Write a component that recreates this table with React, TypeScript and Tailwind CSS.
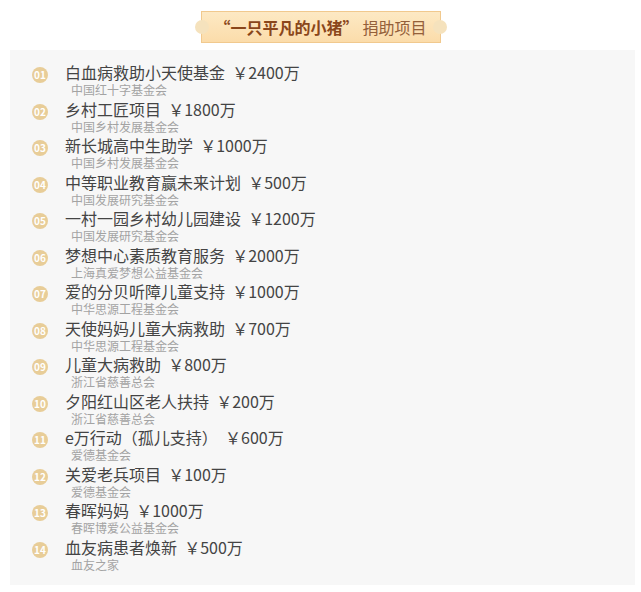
const ITEMS = [
  { name: '白血病救助小天使基金', amount: '2400万', org: '中国红十字基金会' },
  { name: '乡村工匠项目', amount: '1800万', org: '中国乡村发展基金会' },
  { name: '新长城高中生助学', amount: '1000万', org: '中国乡村发展基金会' },
  { name: '中等职业教育赢未来计划', amount: '500万', org: '中国发展研究基金会' },
  { name: '一村一园乡村幼儿园建设', amount: '1200万', org: '中国发展研究基金会' },
  { name: '梦想中心素质教育服务', amount: '2000万', org: '上海真爱梦想公益基金会' },
  { name: '爱的分贝听障儿童支持', amount: '1000万', org: '中华思源工程基金会' },
  { name: '天使妈妈儿童大病救助', amount: '700万', org: '中华思源工程基金会' },
  { name: '儿童大病救助', amount: '800万', org: '浙江省慈善总会' },
  { name: '夕阳红山区老人扶持', amount: '200万', org: '浙江省慈善总会' },
  { name: 'e万行动（孤儿支持）', amount: '600万', org: '爱德基金会' },
  { name: '关爱老兵项目', amount: '100万', org: '爱德基金会' },
  { name: '春晖妈妈', amount: '1000万', org: '春晖博爱公益基金会' },
  { name: '血友病患者焕新', amount: '500万', org: '血友之家' },
];

function Badge({ n }: { n: number }) {
  return (
    <div className="w-[16px] h-[16px] rounded-full bg-[#e8cd98] text-white text-[10px] font-bold leading-[16px] text-center shrink-0">
      {String(n).padStart(2, '0')}
    </div>
  );
}

export default function App() {
  return (
    <div
      className="w-[641px] h-[592px] bg-white flex flex-col items-center"
      style={{ fontFamily: '"Noto Sans CJK SC", "Noto Sans", sans-serif' }}
    >
      <div className="relative mt-[11px] w-[240px] h-[32px] bg-gradient-to-b from-[#fde9c4] to-[#fbdcaa] border border-[#f1c98e] flex items-center justify-center text-[16px] leading-[20px]">
        <span className="absolute left-[-7px] top-[8px] w-[14px] h-[14px] rounded-full bg-[#f5e2bd]" />
        <span className="absolute right-[-7px] top-[8px] w-[14px] h-[14px] rounded-full bg-[#f5e2bd]" />
        <span className="font-bold text-[#8a461a]">“一只平凡的小猪”</span>
        <span className="ml-[4px] text-[#94603a]">捐助项目</span>
      </div>

      <div className="mt-[7px] w-[625px] ml-[4px] bg-[#f7f7f7] pt-[12px] pb-[12px] pl-[22px] flex flex-col">
        {ITEMS.map((item, i) => (
          <div key={i} className="flex h-[36.5px]">
            <div className="pt-[5px]">
              <Badge n={i + 1} />
            </div>
            <div className="ml-[17px] flex flex-col">
              <div className="text-[16px] leading-[21px] text-[#444] whitespace-pre">
                {item.name}
                {'  ￥'}
                {item.amount}
              </div>
              <div className="ml-[6px] text-[12px] leading-[14px] text-[#a3a3a3]">{item.org}</div>
            </div>
          </div>
        ))}
      </div>
    </div>
  );
}
